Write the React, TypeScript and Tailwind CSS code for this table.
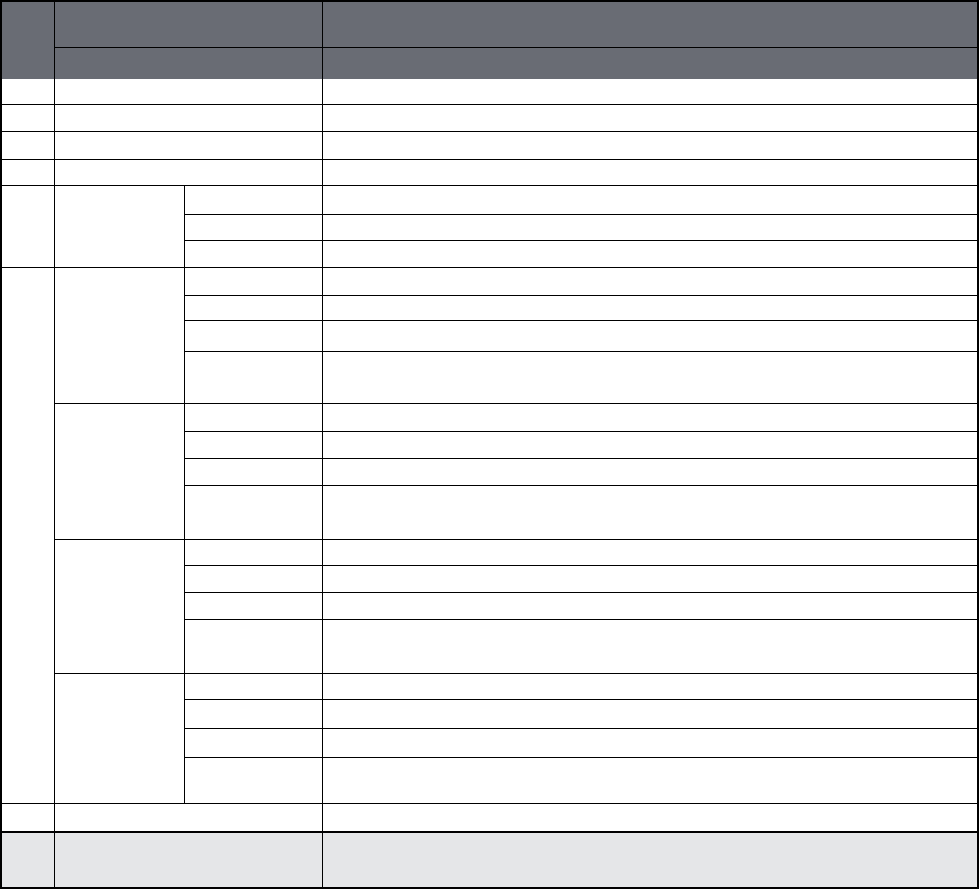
const rowHeights =
  'grid-rows-[46px_31px_26px_27px_28px_26px_29px_26px_27px_28px_25px_31px_52px_28px_27px_27px_54px_26px_27px_27px_54px_26px_29px_29px_46px_29px_54px]';

// plain body cell: black lines right and bottom
const cell = 'border-r border-b border-black bg-white';
const last = 'border-b border-black bg-white';

function Group({ rows }: { rows: number }) {
  const subRows = Array.from({ length: rows });
  return (
    <>
      {subRows.map((_, i) => (
        <div key={i} className="contents">
          <div className={cell} />
          <div className={last} />
        </div>
      ))}
    </>
  );
}

export default function App() {
  return (
    <div className="w-[979px] h-[889px] bg-white">
      <div
        className={`grid grid-cols-[53px_130px_138px_1fr] ${rowHeights} w-[979px] h-[889px] border-2 border-black`}
      >
        {/* header */}
        <div className="row-span-2 border-r border-black bg-[#696c74]" />
        <div className="col-span-2 border-r border-b border-black bg-[#696c74]" />
        <div className="border-b border-black bg-[#696c74]" />
        <div className="col-span-2 border-r border-black bg-[#696c74]" />
        <div className="bg-[#696c74]" />

        {/* single rows */}
        {[0, 1, 2, 3].map((i) => (
          <div key={i} className="contents">
            <div className={cell} />
            <div className={`col-span-2 ${cell}`} />
            <div className={last} />
          </div>
        ))}

        {/* first group */}
        <div className={`row-span-3 ${cell}`} />
        <div className={`row-span-3 ${cell}`} />
        <Group rows={3} />

        {/* second group, four sub blocks */}
        <div className={`row-span-16 ${cell}`} />
        <div className={`row-span-4 ${cell}`} />
        <Group rows={4} />
        <div className={`row-span-4 ${cell}`} />
        <Group rows={4} />
        <div className={`row-span-4 ${cell}`} />
        <Group rows={4} />
        <div className={`row-span-4 ${cell}`} />
        <Group rows={4} />

        {/* closing row */}
        <div className="border-r border-b-2 border-black bg-white" />
        <div className="col-span-2 border-r border-b-2 border-black bg-white" />
        <div className="border-b-2 border-black bg-white" />

        {/* total row */}
        <div className="border-r border-black bg-[#e5e6e8]" />
        <div className="col-span-2 border-r border-black bg-[#e5e6e8]" />
        <div className="bg-[#e5e6e8]" />
      </div>
    </div>
  );
}
